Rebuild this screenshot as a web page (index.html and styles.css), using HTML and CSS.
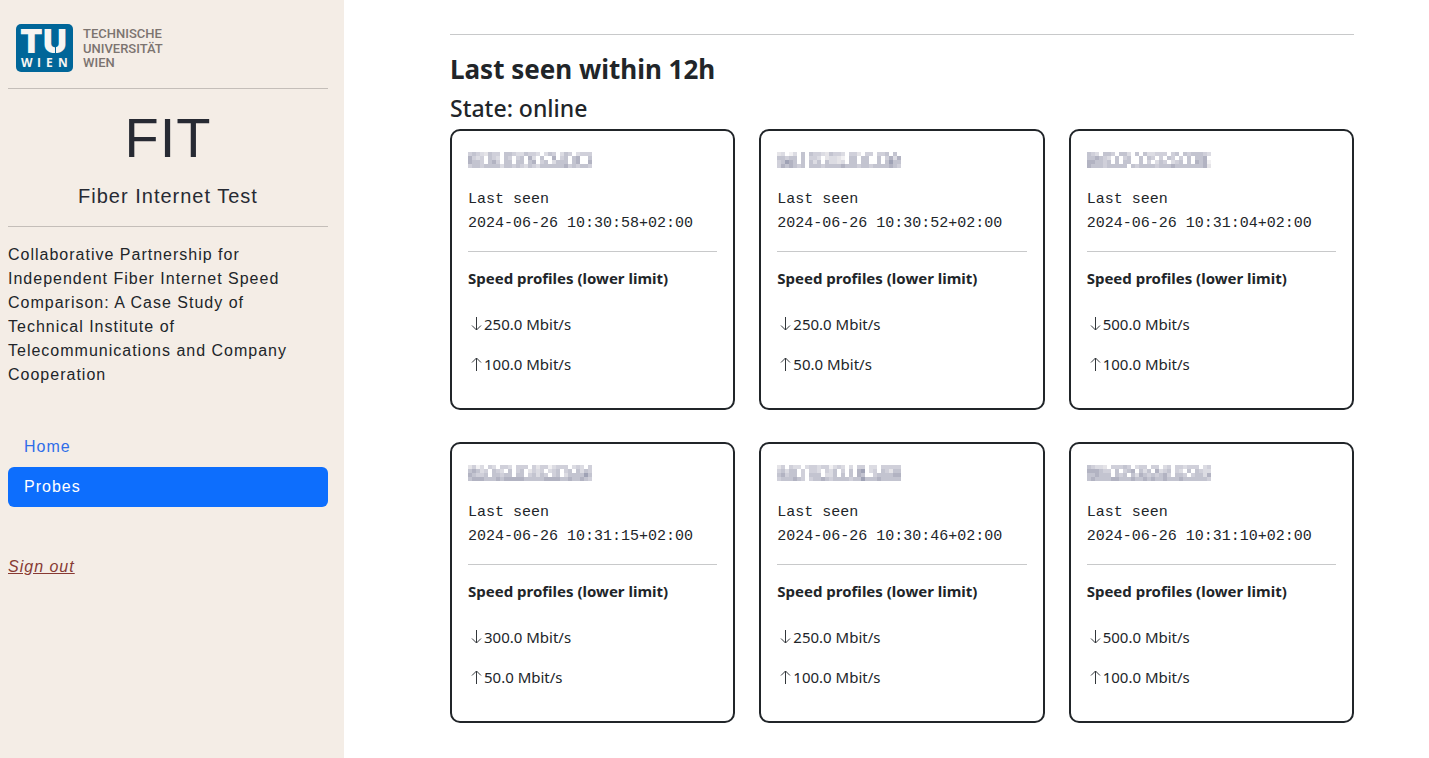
FILE: index.html
```html
<!DOCTYPE html>
<html lang="en">
<head>
<meta charset="utf-8">
<title>FIT - Probes</title>
<link rel="stylesheet" href="styles.css">
</head>
<body>
<aside class="sidebar">
  <svg class="logo" width="154" height="48" viewBox="0 0 154 48" role="img" aria-label="TU Wien">
    <rect width="57" height="48" rx="5" fill="#006699"/>
    <g fill="#f7f5f2">
      <text class="logo-tu" x="4 27" y="29">TU</text>
      <text class="logo-wien" x="5 21 30 42" y="43">WIEN</text>
    </g>
    <path d="M39.5 21V30" stroke="#006699" stroke-width="1"/>
    <g class="logo-name"><text x="67" y="14">TECHNISCHE</text><text x="67" y="29">UNIVERSITÄT</text><text x="67" y="43">WIEN</text></g>
  </svg>
  <hr>
  <header class="brand">
    <h1>FIT</h1>
    <p>Fiber Internet Test</p>
  </header>
  <hr>
  <p class="about">Collaborative Partnership for Independent Fiber Internet Speed Comparison: A Case Study of Technical Institute of Telecommunications and Company Cooperation</p>
  <nav class="menu">
    <a href="#home">Home</a>
    <a class="active" href="#probes" aria-current="page">Probes</a>
  </nav>
  <a class="signout" href="#signout">Sign out</a>
</aside>
<main class="content">
  <hr>
  <h2>Last seen within 12h</h2>
  <h3>State: online</h3>
  <div class="probes" id="probes"></div>
</main>
<script src="probes.js"></script>
</body>
</html>
```

FILE: styles.css
```css
* { box-sizing: border-box; }
body {
  margin: 0;
  min-height: 100vh;
  display: flex;
  background: #fff;
  color: #212529;
  font: 15px/24px "Noto Sans", "Open Sans", sans-serif;
}
hr { width: 100%; margin: 16px 0; border: 0; border-top: 1px solid #c8c9ca; }
h1, h2, h3, h4, p { margin: 0; }
.sidebar {
  flex: none;
  width: 344px;
  padding: 24px 16px 24px 8px;
  background: #f4ede6;
  font: 16px/24px "Liberation Sans", Arial, sans-serif;
  letter-spacing: 1px;
}
.sidebar hr { border-color: #c4beb9; }
.logo { display: block; margin-left: 8px; letter-spacing: 0; overflow: visible; }
.logo-tu { font: 900 33px Inter, sans-serif; }
.logo-wien { font: 700 12px "Open Sans", sans-serif; }
.logo-name { font: 500 13px Roboto, sans-serif; fill: #7c7470; }
.brand { text-align: center; color: #272a33; }
.brand h1 { font-size: 56px; line-height: 66px; font-weight: 400; }
.brand p { margin: 13px 0 18px; font-size: 20px; }
.about { padding-right: 24px; }
.menu { display: flex; flex-direction: column; margin: 40px 0 48px; }
.menu a { padding: 8px 16px; border-radius: 6px; color: #2f6de9; text-decoration: none; }
.menu .active { background: #0d6efd; color: #fff; }
.signout { color: #873a33; font-style: italic; }
.content { flex: 1; min-width: 0; padding: 18px 75px 32px 106px; }
h2 { font-size: 26px; line-height: 36px; }
h3 { margin: 7px 0; font-size: 23px; line-height: 28px; font-weight: 500; }
.probes { display: grid; grid-template-columns: repeat(3, minmax(0, 1fr)); gap: 32px 24px; }
.card { border: 2px solid #212529; border-radius: 10px; padding: 16px; }
.card hr { margin: 15px 0 14px; }
.probe-id { display: block; height: 16px; margin: 5px 0 20px; }
.seen { display: block; font: 15px/24px "Liberation Mono", monospace; }
.card h4 { margin-bottom: 22px; font-size: 15px; }
.rate { display: flex; align-items: center; margin-bottom: 16px; }
.rate svg { flex: none; fill: none; stroke: #33373b; stroke-width: 1; }
```

FILE: probes.js
```js
// Each mask is four rows of tone digits, 0 (clear) to 9 (darkest).
const probes = [
  { seen: "10:30:58", down: "250.0", up: "100.0", mask: ["4543254405543354430354035403444", "6434054305404506305006045056005", "6554056405505505604503555056006", "4554555535545435435555556454554"] },
  { seen: "10:30:52", down: "250.0", up: "50.0", mask: ["2301305054432544304420440445050", "5545505044302332105505500504636", "4576505053505332305505500505755", "4656545055545555655545545555654"] },
  { seen: "10:31:04", down: "500.0", up: "100.0", mask: ["5430554055305053344404505455543", "5565430504500505404054040505560", "6655450505500504035403450506561", "6555455555054555545556555555562"] },
  { seen: "10:31:15", down: "300.0", up: "50.0", mask: ["2413043044304440424413444034304", "5653405430504502434034504505354", "6544505545505504535404503555575", "5666555656666655555666655655654"] },
  { seen: "10:30:46", down: "250.0", up: "100.0", mask: ["2404330344344134303044033044444", "4535504044304350405067034054255", "5645504055503350505065004555566", "4555654045565455554557555655555"] },
  { seen: "10:31:10", down: "500.0", up: "100.0", mask: ["5433204445403440440340443444034", "6665440504560535063450430505433", "5565550545053654545640554045536", "5655556655565565655655565555554"] }
];
const tones = ["#fff", "#f2f1f3", "#e5e4e8", "#dcdce3", "#d0d0da", "#c3c4d0", "#b2b3c2", "#9fa2b5"];

function mosaic(rows) {
  const cells = rows.flatMap((row, y) => [...row].map((tone, x) =>
    `<rect x="${x * 4}" y="${y * 4}" width="4" height="4" fill="${tones[tone]}"/>`));
  return `<svg class="probe-id" width="124" height="16" shape-rendering="crispEdges" role="img" aria-label="Hidden probe ID">${cells.join("")}</svg>`;
}

function rate(value, arrow) {
  return `<p class="rate"><svg width="16" height="16" viewBox="0 0 16 16" aria-hidden="true"><path d="${arrow}"/></svg>${value} Mbit/s</p>`;
}

document.getElementById("probes").innerHTML = probes.map(p => `
  <article class="card">
    ${mosaic(p.mask)}
    <span class="seen">Last seen</span>
    <time class="seen">2024-06-26 ${p.seen}+02:00</time>
    <hr>
    <h4>Speed profiles (lower limit)</h4>
    ${rate(p.down, "M8.5 1V14M4 9.5L8.5 14L13 9.5")}
    ${rate(p.up, "M8.5 15V2M4 6.5L8.5 2L13 6.5")}
  </article>`).join("");
```
